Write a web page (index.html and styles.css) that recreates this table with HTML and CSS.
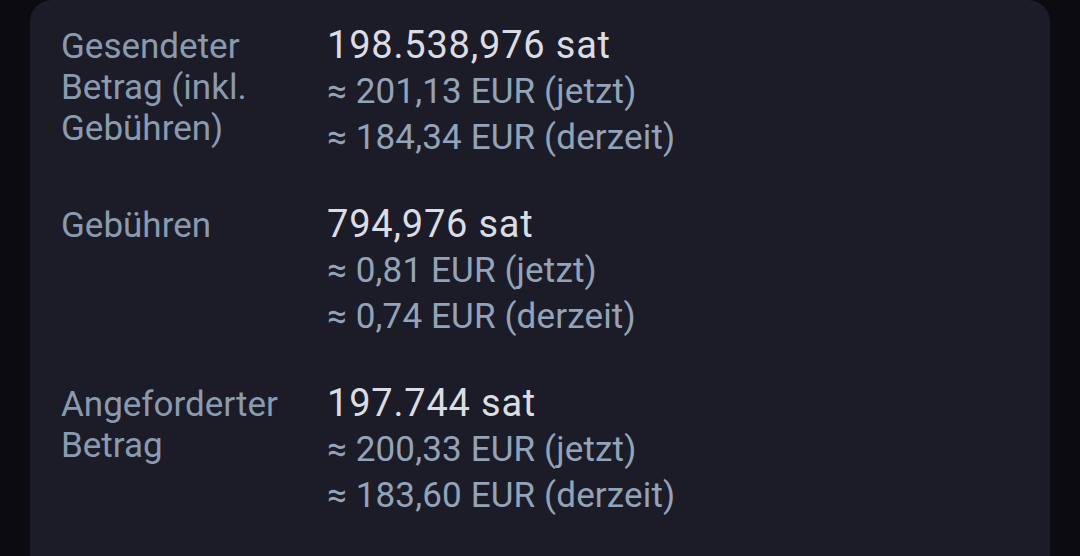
FILE: index.html
```html
<!DOCTYPE html>
<html lang="de">
<head>
<meta charset="utf-8">
<link rel="stylesheet" href="styles.css">
</head>
<body>
<div class="card">
  <div class="row">
    <div class="label">Gesendeter Betrag (inkl. Gebühren)</div>
    <div class="values">
      <div class="main">198.538,976 sat</div>
      <div class="sub">≈ 201,13 EUR (jetzt)</div>
      <div class="sub">≈ 184,34 EUR (derzeit)</div>
    </div>
  </div>
  <div class="row">
    <div class="label">Gebühren</div>
    <div class="values">
      <div class="main">794,976 sat</div>
      <div class="sub">≈ 0,81 EUR (jetzt)</div>
      <div class="sub">≈ 0,74 EUR (derzeit)</div>
    </div>
  </div>
  <div class="row">
    <div class="label">Angeforderter Betrag</div>
    <div class="values">
      <div class="main">197.744 sat</div>
      <div class="sub">≈ 200,33 EUR (jetzt)</div>
      <div class="sub">≈ 183,60 EUR (derzeit)</div>
    </div>
  </div>
</div>
</body>
</html>
```

FILE: styles.css
```css
html, body {
  margin: 0;
  padding: 0;
  background: #0c0c10;
  width: 1080px;
  height: 556px;
  overflow: hidden;
  font-family: Roboto, "Noto Sans", sans-serif;
}
.card {
  margin-left: 30px;
  width: 1020px;
  height: 556px;
  background: #1c1c28;
  border-radius: 22px 22px 0 0;
  padding: 22px 0 0 31px;
  box-sizing: border-box;
  display: flex;
  flex-direction: column;
  gap: 40px;
}
.row {
  display: flex;
}
.label {
  width: 230px;
  margin-right: 36px;
  padding-top: 4px;
  color: #8a9bb0;
  font-size: 35px;
  line-height: 41px;
}
.values {
  display: flex;
  flex-direction: column;
}
.main {
  color: #dcdce4;
  font-size: 38px;
  letter-spacing: 0.8px;
  line-height: 47px;
}
.sub {
  color: #93a3b8;
  font-size: 35px;
  letter-spacing: 0.15px;
  line-height: 46px;
}
```
